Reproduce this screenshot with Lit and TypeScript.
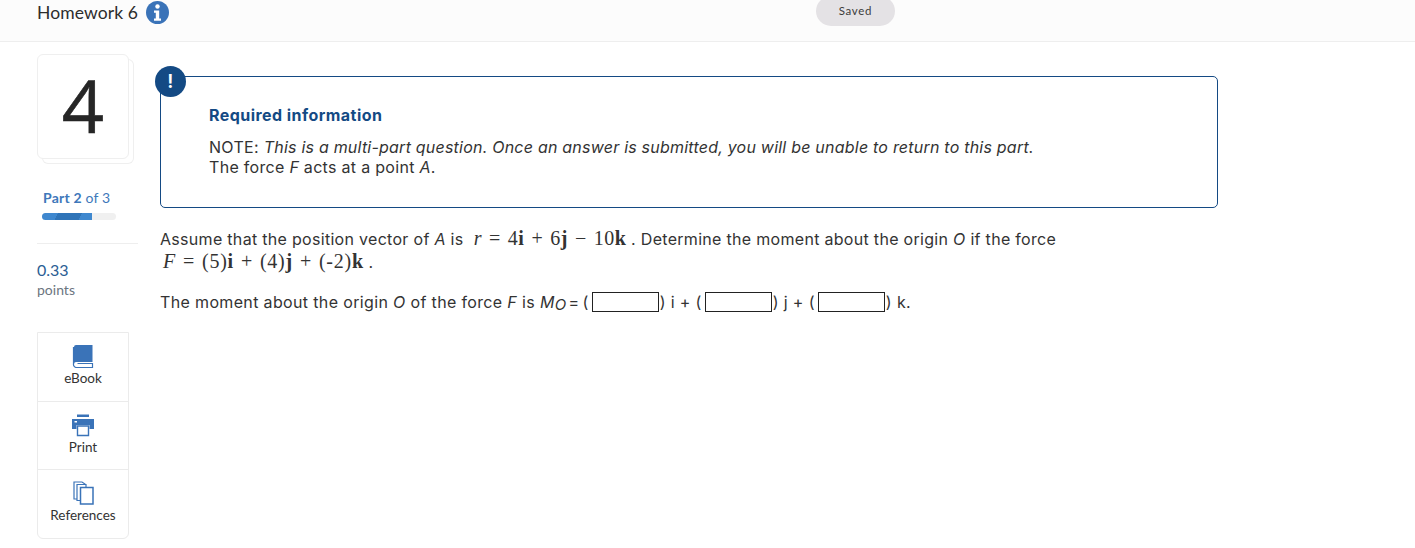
import { LitElement, html, css } from 'lit';
import { customElement } from 'lit/decorators.js';

@customElement('app-root')
export class AppRoot extends LitElement {
  static styles = css`
    :host {
      display: block;
      height: 548px;
      overflow: hidden;
      background: #fff;
      color: #2d2d2d;
      font-family: Lato, 'Open Sans', sans-serif;
      font-size: 16.5px;
    }
    .top {
      display: flex;
      height: 41px;
      border-bottom: 1px solid #eeeeee;
      background: #fcfcfc;
      position: relative;
      padding-left: 37px;
    }
    .title {
      display: flex;
      align-items: center;
      gap: 8px;
      height: 24px;
      font-size: 17.5px;
      letter-spacing: 0.1px;
    }
    .info {
      width: 23px;
      height: 23px;
    }
    .saved {
      position: absolute;
      left: 816px;
      top: -4px;
      width: 79px;
      height: 30px;
      padding-bottom: 1px;
      border-radius: 15px;
      background: #e4e2e5;
      font-size: 11.5px;
      letter-spacing: 0.7px;
      color: #3c3c3c;
      display: flex;
      align-items: center;
      justify-content: center;
      box-sizing: border-box;
    }
    .content {
      display: flex;
      padding: 12px 0 0 37px;
      gap: 22px;
    }
    .side {
      width: 101px;
      flex: none;
    }
    .num {
      width: 92px;
      height: 105px;
      box-sizing: border-box;
      border: 1px solid #efefef;
      border-radius: 6px;
      background: #fff;
      box-shadow: 5px 5px 0 -1px #fff, 5px 5px 0 0 #efefef;
      display: flex;
      justify-content: center;
      padding-top: 13px;
      font-family: 'Open Sans', sans-serif;
      font-size: 74px;
      line-height: 1;
      color: #262626;
      -webkit-text-stroke: 0.6px #262626;
    }
    .part {
      margin: 30px 0 0 6px;
      font-size: 14px;
      line-height: 17px;
      letter-spacing: 0.2px;
      color: #3e78ba;
    }
    .part b {
      font-weight: 700;
    }
    .bar {
      margin: 7px 0 0 5px;
      width: 74px;
      height: 7px;
      border-radius: 4px;
      background: #f0f0f0;
      overflow: hidden;
    }
    .bar div {
      height: 100%;
      width: 50px;
      background: linear-gradient(
        115deg,
        #3f88cf 0 30%,
        #2f74b8 30% 75%,
        #3f88cf 75%
      );
    }
    .rule {
      margin-top: 23px;
      border-top: 1px solid #eeeeee;
    }
    .score {
      margin-top: 16px;
      font-size: 16px;
      line-height: 20px;
      color: #2b5e94;
    }
    .pts {
      font-size: 14px;
      line-height: 20px;
      color: #6b7580;
    }
    .tools {
      margin-top: 32px;
      width: 92px;
      box-sizing: border-box;
      border: 1px solid #ebebeb;
      border-radius: 0 0 6px 6px;
    }
    .tool {
      height: 68px;
      display: flex;
      flex-direction: column;
      align-items: center;
      justify-content: flex-end;
      padding-bottom: 14px;
      box-sizing: border-box;
      font-size: 13.5px;
      line-height: 16px;
      color: #333;
      gap: 2px;
    }
    .tool:first-child {
      padding-bottom: 15px;
    }
    .tool:last-child {
      height: 69px;
      padding-bottom: 15px;
    }
    .tool + .tool {
      border-top: 1px solid #ebebeb;
    }
    .tool svg {
      width: 24px;
      height: 24px;
      display: block;
    }
    .main {
      width: 1058px;
      flex: none;
      padding-top: 22px;
      font-family: Inter, sans-serif;
      font-size: 16px;
      letter-spacing: 0.3px;
      color: #333;
    }
    .note {
      position: relative;
      box-sizing: border-box;
      height: 132px;
      border: 1px solid #144a84;
      border-radius: 5px;
      padding: 28px 48px 0;
    }
    .note i {
      letter-spacing: 0.22px;
    }
    .bang {
      position: absolute;
      left: -6px;
      top: -11px;
      width: 31px;
      height: 31px;
      border-radius: 50%;
      background: #144a84;
      color: #fff;
      font-weight: 600;
      font-size: 19px;
      display: flex;
      align-items: center;
      justify-content: center;
    }
    .req {
      font-weight: 700;
      letter-spacing: 0.45px;
      color: #144a84;
      line-height: 20px;
      margin-bottom: 12px;
    }
    .note p {
      margin: 0;
      line-height: 20px;
    }
    .q {
      margin: 20px 0 0;
      line-height: 23px;
    }
    .a {
      margin: 16px 0 0;
      line-height: 24px;
      display: flex;
      align-items: center;
      white-space: pre;
      letter-spacing: 0.35px;
    }
    .m {
      font-family: 'Liberation Serif', serif;
      font-size: 20px;
      line-height: 0;
      letter-spacing: 0.5px;
      color: #333;
    }
    .m.first {
      margin-left: 3px;
      letter-spacing: 0.75px;
    }
    .op {
      margin: 0 7px;
    }
    .eq {
      margin: 0 3px 0 2px;
    }
    sub {
      font-size: 15px;
      line-height: 0;
      position: relative;
      top: 3px;
      vertical-align: baseline;
    }
    .box {
      width: 67px;
      height: 20px;
      box-sizing: border-box;
      border: 1px solid #222;
      margin: 0 1px 0 3px;
      background: #fff;
    }
  `;

  protected render() {
    return html`
      <div class="top">
        <div class="title">
          Homework 6
          <svg class="info" viewBox="0 0 23 23">
            <circle cx="11.5" cy="11.5" r="11.5" fill="#3a73b8" />
            <circle cx="11.5" cy="5.5" r="2.2" fill="#fff" />
            <path d="M8 9.5h5.2v8H15v2.2H8v-2.2h1.8v-5.8H8z" fill="#fff" />
          </svg>
        </div>
        <div class="saved">Saved</div>
      </div>
      <div class="content">
        <div class="side">
          <div class="num">4</div>
          <div class="part"><b>Part 2</b> of 3</div>
          <div class="bar"><div></div></div>
          <div class="rule"></div>
          <div class="score">0.33</div>
          <div class="pts">points</div>
          <div class="tools">
            <div class="tool">
              <svg viewBox="0 0 24 24">
                <path
                  d="M3 3A2 2 0 0 1 5 1h16.500v17H5a2 2 0 0 0-2 2z"
                  fill="#3a73b8"
                />
                <path
                  d="M2.500 3v17a3 3 0 0 0 3 3.500h16v-4H6.500"
                  fill="none"
                  stroke="#3a73b8"
                  stroke-width="1.200"
                />
              </svg>
              eBook
            </div>
            <div class="tool">
              <svg viewBox="0 0 24 24">
                <path d="M6 1.500h12V4H6z" fill="#3a73b8" />
                <path d="M1 6h22v10h-4.500v-4h-13v4H1z" fill="#3a73b8" />
                <path d="M3.500 8H6v1.500H3.500z" fill="#fff" />
                <path
                  d="M6.500 13h11v9.500h-11z"
                  fill="#fff"
                  stroke="#3a73b8"
                  stroke-width="1.400"
                />
              </svg>
              Print
            </div>
            <div class="tool">
              <svg viewBox="0 0 24 24">
                <path
                  d="M3 1h8l3 2v15H3z"
                  fill="#fff"
                  stroke="#3a73b8"
                  stroke-width="1.200"
                />
                <path
                  d="M6 3.500h9v16H6z"
                  fill="#fff"
                  stroke="#3a73b8"
                  stroke-width="1.200"
                />
                <path
                  d="M9.500 6.500h12.500v16.500H9.500z"
                  fill="#fff"
                  stroke="#3a73b8"
                  stroke-width="1.500"
                />
              </svg>
              References
            </div>
          </div>
        </div>
        <div class="main">
          <div class="note">
            <div class="bang">!</div>
            <div class="req">Required information</div>
            <p>
              NOTE: <i>This is a multi-part question. Once an answer is submitted, you will be unable to return to this part.</i>
            </p>
            <p>The force <i>F</i> acts at a point <i>A</i>.</p>
          </div>
          <div class="q">
            Assume that the position vector of <i>A</i> is
            <span class="m">
              &nbsp;<i>r</i><span class="op">=</span>4<b>i</b><span class="op">+</span>6<b>j</b><span class="op">−</span>10<b>k</b></span>
            . Determine the moment about the origin <i>O</i> if the force<br />
            <span class="m first"><i>F</i><span class="op">=</span>(5)<b>i</b><span class="op">+</span>(4)<b>j</b><span class="op">+</span>(-2)<b>k</b></span> .
          </div>
          <div class="a">The moment about the origin <i>O</i> of the force <i>F</i> is <i>M</i><sub><i>O</i></sub><span class="eq">=</span>(<span class="box"></span>) i + (<span class="box"></span>) j + (<span class="box"></span>) k.</div>
        </div>
      </div>
    `;
  }
}
